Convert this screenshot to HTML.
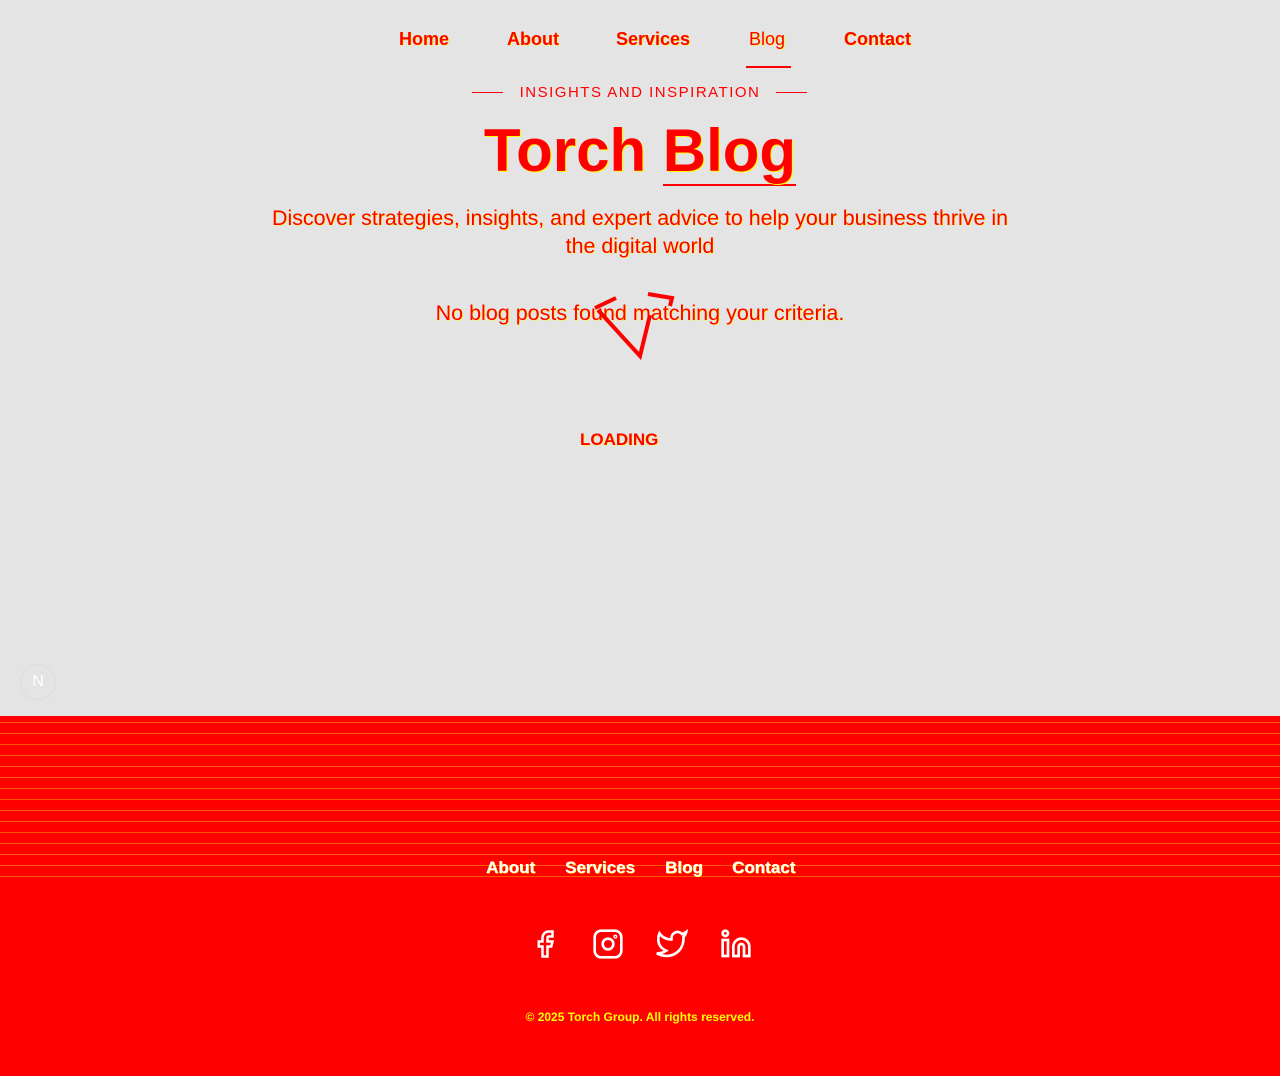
<!DOCTYPE html>
<html><head><meta charset="utf-8"><style>
body{margin:0;width:1280px;height:1076px;background:#e4e4e4;font-family:"Liberation Sans",sans-serif;position:relative;overflow:hidden}
nav{position:absolute;top:29px;left:0;width:1280px;height:40px}
nav a{position:absolute;font-size:18px;font-weight:bold;color:#f00;text-decoration:none;text-shadow:0.7px 0.7px 0 #ff0}
.ul{position:absolute;left:746px;top:66px;width:45px;height:2px;background:#f00}
.sub{position:absolute;top:84px;left:0;width:1280px;text-align:center;font-size:15px;letter-spacing:1.5px;color:#f00}
.ln{position:absolute;top:92px;width:31px;height:1px;background:#f00}
h1{position:absolute;top:116px;left:0;width:1280px;text-align:center;margin:0;font-size:60px;font-weight:bold;color:#f00;text-shadow:1px 1px 0 #ff0;line-height:70px}
h1 span{border-bottom:2px solid #f00}
.desc{position:absolute;top:204px;left:240px;width:800px;text-align:center;font-size:21.4px;line-height:28px;color:#f00;text-shadow:0.6px 0.6px 0 #ff0}
.nop{position:absolute;top:301px;left:0;width:1280px;text-align:center;font-size:21.5px;color:#f00;text-shadow:0.6px 0.6px 0 #ff0}
.load{position:absolute;top:430px;left:580px;font-size:17px;font-weight:bold;color:#f00;text-shadow:0.6px 0.6px 0 #ff0}
.badge{position:absolute;left:20px;top:664px;width:34px;height:34px;border-radius:50%;border:1px solid #ddd;color:#fff;font-size:16px;text-align:center;line-height:34px}
footer{position:absolute;top:716px;left:0;width:1280px;height:360px;background:#f00}
.dots{position:absolute;top:0;left:0;width:1280px;height:170px;background:repeating-linear-gradient(#f00 0 6px,rgba(255,255,0,.35) 6px 7px,#f00 7px 11px)}
.fl{position:absolute;top:858px;font-size:17px;font-weight:bold;color:#fff;text-shadow:0.6px 0.6px 0 #ff0}
.copy{position:absolute;top:1010px;left:0;width:1280px;text-align:center;font-size:12px;color:#ff0;font-weight:bold}
svg.ic{position:absolute;top:928px}
</style></head><body>
<nav>
<a style="left:399px">Home</a><a style="left:507px">About</a><a style="left:616px">Services</a><a style="left:749px;font-weight:normal">Blog</a><a style="left:844px">Contact</a>
</nav>
<div class="ul"></div>
<div class="ln" style="left:472px"></div><div class="ln" style="left:776px"></div>
<div class="sub">INSIGHTS AND INSPIRATION</div>
<h1>Torch <span>Blog</span></h1>
<div class="desc">Discover strategies, insights, and expert advice to help your business thrive in<br>the digital world</div>
<div class="nop">No blog posts found matching your criteria.</div>
<svg style="position:absolute;left:590px;top:290px" width="90" height="72"><path d="M5 18 L26 8 M8 20 L50 66 L60 25 M58 4 L82 8 L80 16" stroke="#f00" stroke-width="4" fill="none"/></svg>
<div class="load">LOADING</div>
<div class="badge">N</div>
<footer><div class="dots"></div></footer>
<div class="fl" style="left:486px">About</div>
<div class="fl" style="left:565px">Services</div>
<div class="fl" style="left:665px">Blog</div>
<div class="fl" style="left:732px">Contact</div>
<svg class="ic" style="left:530px" width="30" height="32" viewBox="0 0 24 24" fill="none" stroke="#fff" stroke-width="2"><path d="M18 2h-3a5 5 0 0 0-5 5v3H7v4h3v8h4v-8h3l1-4h-4V7a1 1 0 0 1 1-1h3z"/></svg>
<svg class="ic" style="left:592px" width="32" height="32" viewBox="0 0 24 24" fill="none" stroke="#fff" stroke-width="2"><rect x="2" y="2" width="20" height="20" rx="5"/><circle cx="12" cy="12" r="4"/><circle cx="17.5" cy="6.5" r=".5"/></svg>
<svg class="ic" style="left:655px" width="33" height="32" viewBox="0 0 24 24" fill="none" stroke="#fff" stroke-width="2"><path d="M23 3a10.9 10.9 0 0 1-3.14 1.53 4.48 4.48 0 0 0-7.86 3v1A10.66 10.66 0 0 1 3 4s-4 9 5 13a11.64 11.64 0 0 1-7 2c9 5 20 0 20-11.5a4.5 4.5 0 0 0-.08-.83A7.72 7.72 0 0 0 23 3z"/></svg>
<svg class="ic" style="left:720px" width="32" height="32" viewBox="0 0 24 24" fill="none" stroke="#fff" stroke-width="2"><path d="M16 8a6 6 0 0 1 6 6v7h-4v-7a2 2 0 0 0-4 0v7h-4v-7a6 6 0 0 1 6-6z"/><rect x="2" y="9" width="4" height="12"/><circle cx="4" cy="4" r="2"/></svg>
<div class="copy">© 2025 Torch Group. All rights reserved.</div>
</body></html>
